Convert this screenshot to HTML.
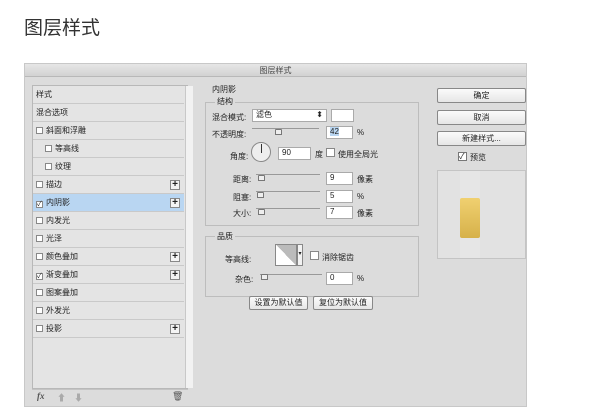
<!DOCTYPE html>
<html><head><meta charset="utf-8"><style>
*{margin:0;padding:0;box-sizing:border-box}
body{width:600px;height:420px;background:#fff;font-family:"Liberation Sans","Noto Sans CJK SC",sans-serif;position:relative;overflow:hidden;color:#222}
.a{position:absolute}
.h1{left:24px;top:13px;font-size:19px;color:#333}
.dlg{left:24px;top:63px;width:503px;height:344px;background:#dcdcdc;border:1px solid #c8c8c8}
.tb{left:0;top:0;width:501px;height:13px;background:linear-gradient(#e6e6e6,#d2d2d2);border-bottom:1px solid #b8b8b8;font-size:8px;text-align:center;line-height:13px;color:#444}
.list{left:7px;top:21px;width:156px;height:304px;background:#e4e4e4;border:1px solid #b8b8b8}
.sb{left:152px;top:0;width:8px;height:302px;background:#f2f2f2;border-left:1px solid #c8c8c8}
.it{position:absolute;left:0;width:151px;height:18px;border-bottom:1px solid #c9c9c9;font-size:8px;line-height:17px;padding-left:3px;color:#222}
.it.sel{background:#b9d6f2}
.cb{display:inline-block;width:7px;height:7px;border:1px solid #888;background:#fff;vertical-align:-1px;margin-right:3px;font-size:7px;line-height:5px}
.pl{position:absolute;right:4px;top:4px;width:10px;height:10px;border:1px solid #888;background:#f4f4f4;font-size:10px;line-height:8px;text-align:center;font-weight:bold}
.bot{left:7px;top:325px;width:156px;height:14px;font-size:9px;color:#555}
.box{border:1px solid #bdbdbd}
.lbl{font-size:8px;color:#222}
.inp{background:#fff;border:1px solid #aaa;height:12px;font-size:8px;line-height:10px;padding-left:3px}
.sl{height:2px;background:#999;border-bottom:1px solid #ddd}
.th{width:7px;height:6px;border:1px solid #777;background:#eee;border-radius:1px 1px 0 0}
.btn{background:linear-gradient(#fbfbfb,#e6e6e6);border:1px solid #888;border-radius:2px;font-size:8px;text-align:center;line-height:12px;height:14px}
</style></head><body>
<div class="a h1">图层样式</div>
<div class="a dlg">
<div class="a tb">图层样式</div>
<div class="a list">
<div class="it" style="top:0">样式</div>
<div class="it" style="top:18px">混合选项</div>
<div class="it" style="top:36px"><span class="cb"></span>斜面和浮雕</div>
<div class="it" style="top:54px;padding-left:12px"><span class="cb"></span>等高线</div>
<div class="it" style="top:72px;padding-left:12px"><span class="cb"></span>纹理</div>
<div class="it" style="top:90px"><span class="cb"></span>描边<span class="pl">+</span></div>
<div class="it sel" style="top:108px"><span class="cb">✓</span>内阴影<span class="pl">+</span></div>
<div class="it" style="top:126px"><span class="cb"></span>内发光</div>
<div class="it" style="top:144px"><span class="cb"></span>光泽</div>
<div class="it" style="top:162px"><span class="cb"></span>颜色叠加<span class="pl">+</span></div>
<div class="it" style="top:180px"><span class="cb">✓</span>渐变叠加<span class="pl">+</span></div>
<div class="it" style="top:198px"><span class="cb"></span>图案叠加</div>
<div class="it" style="top:216px"><span class="cb"></span>外发光</div>
<div class="it" style="top:234px"><span class="cb"></span>投影<span class="pl">+</span></div>
<div class="a sb"></div>
</div>
<div class="a bot" style="border-top:1px solid #c4c4c4"><span class="a" style="left:5px;top:1px;font-style:italic;font-weight:bold;font-family:'Liberation Serif',serif">fx</span><span class="a" style="left:25px;top:1px;color:#aaa">⬆</span><span class="a" style="left:42px;top:1px;color:#aaa">⬇</span><span class="a" style="left:140px;top:1px">🗑</span></div>

<div class="a lbl" style="left:187px;top:20px">内阴影</div>
<div class="a box" style="left:180px;top:38px;width:214px;height:124px"></div>
<div class="a lbl" style="left:190px;top:32px;background:#dcdcdc;padding:0 2px">结构</div>
<div class="a lbl" style="left:187px;top:48px">混合模式:</div>
<div class="a inp" style="left:227px;top:45px;width:75px;height:13px">滤色<span style="float:right;margin-right:3px">⬍</span></div>
<div class="a" style="left:306px;top:45px;width:23px;height:13px;background:#fff;border:1px solid #aaa"></div>
<div class="a lbl" style="left:187px;top:65px">不透明度:</div>
<div class="a sl" style="left:227px;top:64px;width:67px"></div><div class="a th" style="left:250px;top:65px"></div>
<div class="a inp" style="left:301px;top:62px;width:27px;height:13px"><span style="background:#b9d6f2">42</span></div>
<div class="a lbl" style="left:332px;top:64px">%</div>
<div class="a lbl" style="left:205px;top:87px">角度:</div>
<div class="a" style="left:226px;top:78px;width:20px;height:20px;border-radius:50%;border:1px solid #888;background:#eee"><div class="a" style="left:9px;top:1px;width:1px;height:9px;background:#333"></div></div>
<div class="a inp" style="left:253px;top:83px;width:33px;height:13px">90</div>
<div class="a lbl" style="left:290px;top:85px">度</div>
<div class="a" style="left:301px;top:84px;width:9px;height:9px;border:1px solid #888;background:#fff"></div>
<div class="a lbl" style="left:313px;top:85px">使用全局光</div>
<div class="a lbl" style="left:208px;top:110px">距离:</div>
<div class="a sl" style="left:231px;top:110px;width:64px"></div><div class="a th" style="left:233px;top:111px"></div>
<div class="a inp" style="left:301px;top:108px;width:27px;height:13px">9</div><div class="a lbl" style="left:332px;top:110px">像素</div>
<div class="a lbl" style="left:208px;top:128px">阻塞:</div>
<div class="a sl" style="left:231px;top:127px;width:64px"></div><div class="a th" style="left:232px;top:128px"></div>
<div class="a inp" style="left:301px;top:126px;width:27px;height:13px">5</div><div class="a lbl" style="left:332px;top:128px">%</div>
<div class="a lbl" style="left:208px;top:144px">大小:</div>
<div class="a sl" style="left:231px;top:144px;width:64px"></div><div class="a th" style="left:233px;top:145px"></div>
<div class="a inp" style="left:301px;top:142px;width:27px;height:13px">7</div><div class="a lbl" style="left:332px;top:144px">像素</div>

<div class="a box" style="left:180px;top:172px;width:214px;height:61px"></div>
<div class="a lbl" style="left:190px;top:167px;background:#dcdcdc;padding:0 2px">品质</div>
<div class="a lbl" style="left:200px;top:190px">等高线:</div>
<div class="a" style="left:250px;top:180px;width:22px;height:22px;border:1px solid #888;background:linear-gradient(to top right,#fff 50%,#bbb 50%)"></div>
<div class="a" style="left:272px;top:180px;width:6px;height:22px;border:1px solid #888;background:#f2f2f2;font-size:6px;text-align:center;line-height:18px">▾</div>
<div class="a" style="left:285px;top:187px;width:9px;height:9px;border:1px solid #888;background:#fff"></div>
<div class="a lbl" style="left:297px;top:188px">消除锯齿</div>
<div class="a lbl" style="left:210px;top:210px">杂色:</div>
<div class="a sl" style="left:235px;top:210px;width:62px"></div><div class="a th" style="left:236px;top:210px"></div>
<div class="a inp" style="left:301px;top:208px;width:27px;height:13px">0</div><div class="a lbl" style="left:332px;top:210px">%</div>
<div class="a btn" style="left:224px;top:232px;width:59px">设置为默认值</div>
<div class="a btn" style="left:288px;top:232px;width:60px">复位为默认值</div>

<div class="a btn" style="left:412px;top:24px;width:89px;height:15px;line-height:13px">确定</div>
<div class="a btn" style="left:412px;top:46px;width:89px;height:15px;line-height:13px">取消</div>
<div class="a btn" style="left:412px;top:67px;width:89px;height:15px;line-height:13px">新建样式...</div>
<div class="a" style="left:433px;top:88px;width:9px;height:9px;border:1px solid #777;background:#fff;font-size:8px;line-height:7px">✓</div>
<div class="a lbl" style="left:445px;top:88px">预览</div>
<div class="a" style="left:412px;top:106px;width:89px;height:89px;border:1px solid #c4c4c4;background:#e2e2e2"><div class="a" style="left:22px;top:0;width:20px;height:87px;background:#e6e6e6"></div><div class="a" style="left:22px;top:27px;width:20px;height:40px;background:linear-gradient(#f0d070,#d6b14a);border-radius:2px"></div></div>
</div>
</body></html>
